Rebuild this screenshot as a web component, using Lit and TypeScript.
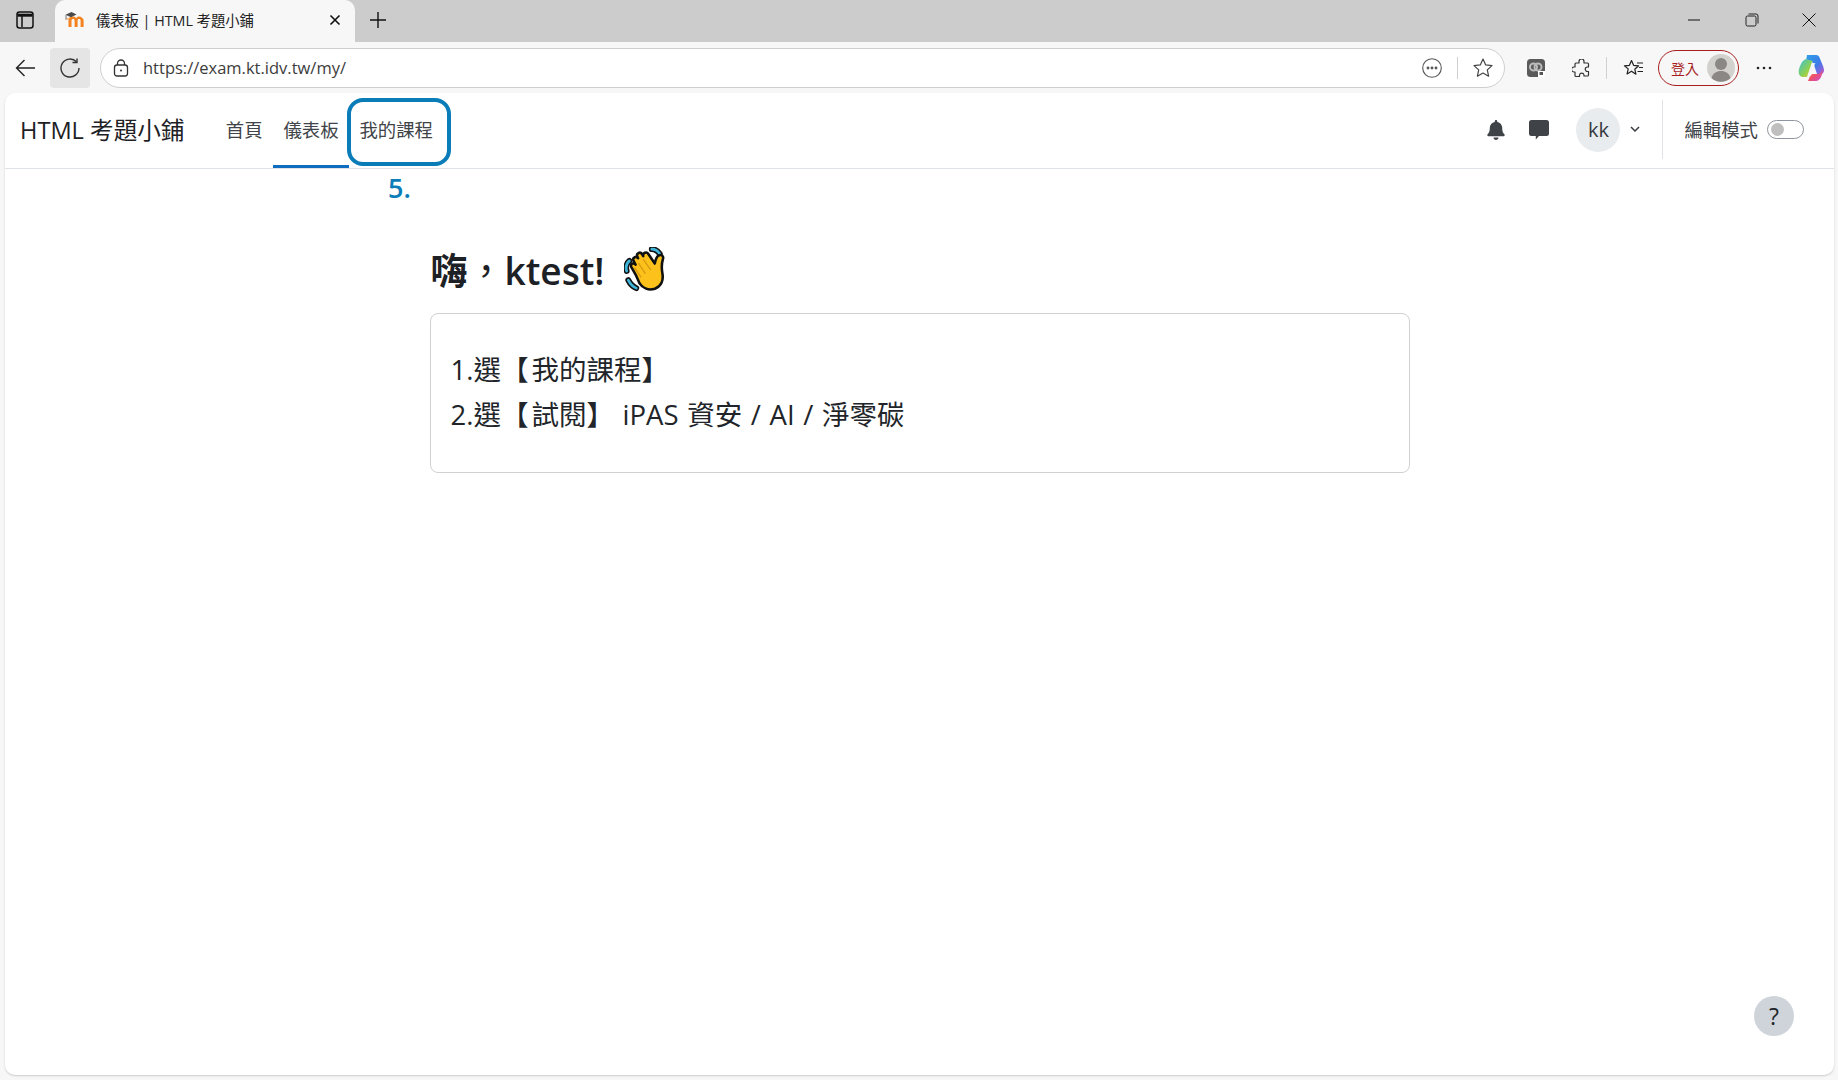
import { LitElement, html, css, svg } from "lit";
import { customElement } from "lit/decorators.js";

@customElement("app-root")
export class AppRoot extends LitElement {
  static styles = css`
    :host { display: block; width: 1838px; height: 1080px; background: #f7f7f7; font-family: "Open Sans", "Noto Sans CJK TC", sans-serif; overflow: hidden; }
  `;
  render() { return html`<browser-chrome></browser-chrome><moodle-page></moodle-page>`; }
}

@customElement("browser-chrome")
export class BrowserChrome extends LitElement {
  static styles = css`
    :host { display: block; font-family: "Open Sans", "Noto Sans CJK TC", sans-serif; color: #1f1f1f; }
    svg { display: block; flex: none; }
    .strip { height: 42px; background: #cccccc; display: flex; align-items: stretch; }
    .side { width: 49px; margin-right: 6px; padding-bottom: 2px; box-sizing: border-box; display: flex; align-items: center; justify-content: center; }
    .tab { width: 300px; background: #f7f7f7; border-radius: 10px 10px 0 0; display: flex; align-items: center; padding: 0 14px 2px 10px; box-sizing: border-box; gap: 10px; }
    .tab-title { flex: 1; font-size: 14.3px; white-space: nowrap; color: #222; margin-top: -2px; }
    .plus { width: 46px; padding-bottom: 2px; box-sizing: border-box; display: flex; align-items: center; justify-content: center; }
    .grow { flex: 1; }
    .win { display: flex; align-items: center; padding-bottom: 2px; }
    .win div { width: 57.5px; display: flex; justify-content: center; }
    .bar { height: 51px; display: flex; align-items: center; padding-top: 1px; box-sizing: border-box; }
    .back { width: 50px; display: flex; justify-content: center; }
    .reload { width: 40px; height: 40px; background: #e5e5e5; border-radius: 4px; display: flex; align-items: center; justify-content: center; }
    .url { margin-left: 10px; width: 1405px; height: 40px; box-sizing: border-box; border: 1px solid #cfcfcf; border-radius: 20px; background: #fff; display: flex; align-items: center; padding: 0 11px 0 12px; }
    .url-text { margin-left: 14px; font-size: 16.5px; color: #3c3c3c; flex: 1; padding-bottom: 1px; }
    .sep { width: 1px; height: 22px; background: #d0d0d0; margin: 0 15px 0 15px; }
    .tools { display: flex; align-items: center; flex: 1; }
    .t1 { margin-left: 22px; }
    .t2 { margin-left: 27px; }
    .tsep { width: 1px; height: 22px; background: #d0d0d0; margin: 0 15px 0 15px; }
    .fav { margin-left: 1px; }
    .signin { margin-left: 14px; width: 81px; height: 36px; box-sizing: border-box; border: 1.5px solid #a81e1e; border-radius: 18px; display: flex; align-items: center; padding: 0 3px 0 12px; justify-content: space-between; font-size: 14px; color: #a81e1e; }
    .dots { margin-left: 17px; }
    .copilot { margin-left: 25px; }
  `;
  render() {
    return html`
      <div class="strip">
        <div class="side">
          <svg width="18" height="18" viewBox="0 0 18 18" fill="none" stroke="#111" stroke-width="1.5"><rect x="1" y="1" width="16" height="16" rx="2.5"/><path d="M1.5 4.2h15" stroke-width="3"/><path d="M6 5v11"/></svg>
        </div>
        <div class="tab">
          <svg width="21" height="18" viewBox="0 0 21 18">
            <g transform="translate(-2.5 0)">
              <path d="M6 8.500V16h3V9.800c0-1 .6-1.700 1.600-1.700s1.500.7 1.500 1.700V16h3V9.800c0-1 .6-1.700 1.500-1.700s1.500.7 1.500 1.700V16h3V8.800C20.100 6.800 18.600 5.500 16.800 5.500c-1.400 0-2.500.6-3.200 1.600-.7-1-1.800-1.600-3.100-1.600C8 5.500 6.500 6.500 6 8.500z" fill="#f58220"/>
              <path d="M2.500 8.500 L6 6.500 L6 8.500 Z" fill="#f5a35c"/>
              <path d="M3 3.800 L9 1 L14 3.400 L8.500 6.200 Z" fill="#4a4a4a"/>
              <path d="M3.500 4v4.500" stroke="#777" stroke-width="1"/>
            </g>
          </svg>
          <div class="tab-title">儀表板 | HTML 考題小鋪</div>
          <svg width="12" height="12" viewBox="0 0 12 12" stroke="#111" stroke-width="1.6" fill="none"><path d="M1.500 1.500l9 9M10.500 1.500l-9 9"/></svg>
        </div>
        <div class="plus"><svg width="18" height="18" viewBox="0 0 18 18" stroke="#111" stroke-width="1.400"><path d="M9 1v16M1 9h16"/></svg></div>
        <div class="grow"></div>
        <div class="win">
          <div><svg width="14" height="14" viewBox="0 0 14 14" stroke="#111" stroke-width="1"><path d="M1 7h12"/></svg></div>
          <div><svg width="14" height="14" viewBox="0 0 14 14" stroke="#222" stroke-width="1" fill="none"><rect x="1" y="3" width="10" height="10" rx="1.500"/><path d="M3.500 1h7.500a2 2 0 0 1 2 2v7.500"/></svg></div>
          <div><svg width="14" height="14" viewBox="0 0 14 14" stroke="#111" stroke-width="1"><path d="M.5.500l13 13M13.500.500l-13 13"/></svg></div>
        </div>
      </div>
      <div class="bar">
        <div class="back"><svg width="20" height="18" viewBox="0 0 20 18" fill="none" stroke="#222" stroke-width="1.400"><path d="M9.500 1L1.500 9l8 8M1.500 9H20"/></svg></div>
        <div class="reload"><svg width="20" height="20" viewBox="0 0 20 20" fill="none" stroke="#333" stroke-width="1.400"><path d="M16.500 3.800A9 9 0 1 0 19 10"/><path d="M17 0.500v4h-4.500"/></svg></div>
        <div class="url">
          <svg width="16" height="18" viewBox="0 0 16 18" fill="none" stroke="#333" stroke-width="1.300"><rect x="1.500" y="6" width="13" height="11" rx="2.500"/><path d="M4.500 6V4.500a3.500 3.500 0 0 1 7 0V6"/><circle cx="8" cy="11.500" r="1" fill="#333" stroke="none"/></svg>
          <div class="url-text">https://exam.kt.idv.tw/my/</div>
          <svg width="20" height="20" viewBox="0 0 20 20" fill="none" stroke="#555" stroke-width="1.100"><circle cx="10" cy="10" r="9.300"/><circle cx="6" cy="10" r=".9" fill="#555"/><circle cx="10" cy="10" r=".9" fill="#555"/><circle cx="14" cy="10" r=".9" fill="#555"/></svg>
          <div class="sep"></div>
          <svg width="20" height="20" viewBox="0 0 20 20" fill="none" stroke="#444" stroke-width="1.200"><path d="M10 1l2.700 5.900 6.300.7-4.700 4.300 1.300 6.300L10 15l-5.600 3.200 1.300-6.300L1 7.600l6.300-.7z" stroke-linejoin="round"/></svg>
        </div>
        <div class="tools">
          <svg class="t1" width="18" height="18" viewBox="0 0 18 18"><rect width="18" height="18" rx="3.500" fill="#5a5a5a"/><circle cx="6.500" cy="8" r="3.500" fill="none" stroke="#bbb" stroke-width="2"/><circle cx="11" cy="8" r="3.500" fill="none" stroke="#bbb" stroke-width="2"/><rect x="11" y="12" width="7" height="6" fill="#fff"/><rect x="12.500" y="13" width="3.500" height="3" fill="#555"/></svg>
          <svg class="t2" width="19" height="19" viewBox="0 0 19 19" fill="none" stroke="#333" stroke-width="1.200"><path d="M7 2.500a2.500 2.500 0 0 1 5 0V4h3.500a1 1 0 0 1 1 1v3h-1a2.200 2.200 0 0 0 0 4.500h1V16a1 1 0 0 1-1 1h-3.500v-1a2.300 2.300 0 0 0-4.500 0v1.500H4a1 1 0 0 1-1-1V13H2a2.500 2.500 0 0 1 0-5h1V5a1 1 0 0 1 1-1h3z" stroke-linejoin="round"/></svg>
          <div class="tsep"></div>
          <svg class="fav" width="21" height="19" viewBox="0 0 21 19" fill="none" stroke="#222" stroke-width="1.200"><path d="M8.500 1.500l2.100 4.800 5 .5-3.800 3.400 1.100 5L8.500 12.200 4.100 14.900l1.100-5L1.400 6.800l5-.5z" stroke-linejoin="round"/><path d="M14 4h6M16 8.500h4M14.500 12.500h5.500"/></svg>
          <div class="signin">
            <span>登入</span>
            <svg width="28" height="28" viewBox="0 0 28 28"><circle cx="14" cy="14" r="14" fill="#d3d1cd"/><circle cx="14" cy="10" r="6" fill="#8a8784"/><path d="M4.500 24c1.500-5 5-7 9.500-7s8 2 9.500 7a14 14 0 0 1-19 0z" fill="#8a8784"/></svg>
          </div>
          <svg class="dots" width="16" height="4" viewBox="0 0 16 4" fill="#222"><circle cx="2" cy="2" r="1.300"/><circle cx="8" cy="2" r="1.300"/><circle cx="14" cy="2" r="1.300"/></svg>
          <svg class="copilot" width="28" height="28" viewBox="0 0 28 28">
            <defs>
              <linearGradient id="cg" x1="0" y1="0" x2="1" y2="1"><stop offset="0" stop-color="#38c0d8"/><stop offset=".6" stop-color="#8fd14f"/><stop offset="1" stop-color="#f6c23c"/></linearGradient>
              <linearGradient id="cr" x1="0" y1="0" x2="1" y2="1"><stop offset="0" stop-color="#f6a93c"/><stop offset=".5" stop-color="#ee4f6a"/><stop offset="1" stop-color="#c64fd8"/></linearGradient>
              <linearGradient id="cp" x1="0" y1="0" x2="1" y2="1"><stop offset="0" stop-color="#2f9fe8"/><stop offset=".55" stop-color="#3b7de8"/><stop offset="1" stop-color="#b455d8"/></linearGradient>
            </defs>
            <path d="M10 1h9c2 0 3 1 3.500 2.500L26 12c1 3 2 6-1 8h-5l-3-9c-1-2-2-4-5-4H9z" fill="url(#cp)"/>
            <path d="M9 5c-3 1-4 3-5 5-2 4-3 7-2 10 .6 2 2 3 4 3h4l4-12c.6-2 .8-3 2-4z" fill="url(#cg)"/>
            <path d="M11 27h8c3 0 5-3 6-7 .5-2 .5-3 .5-5 -1 3-2 5-5 5h-5c-1.500 0-2 1-2.500 2z" fill="url(#cr)"/>
            <path d="M16 9c-1.200 1-1.500 2.500-2 4l-2 6c-.4 1.200-.8 2.500-1.500 3.500h2.500c1.200-1 1.600-2.400 2-3.600l2-6c.4-1.400.8-2.800 1.500-3.900z" fill="#f4f4f4" opacity=".85"/>
          </svg>
        </div>
      </div>
    `;
  }
}

const waveHand = svg`
  <g fill="none" stroke-linecap="round">
    <path d="M5 13c-2.500 2-3.500 6-2.500 9.500" stroke="#111" stroke-width="5.500"/>
    <path d="M5 13c-2.500 2-3.500 6-2.500 9.500" stroke="#3db4d8" stroke-width="2.500"/>
    <path d="M26 2c3 0 5.500 1.500 7.500 4.500" stroke="#111" stroke-width="5.500"/>
    <path d="M26 2c3 0 5.500 1.500 7.500 4.500" stroke="#3db4d8" stroke-width="2.500"/>
    <path d="M4 31c1.500 3 4 6 7.500 7.500" stroke="#111" stroke-width="5.500"/>
    <path d="M4 31c1.500 3 4 6 7.500 7.500" stroke="#3db4d8" stroke-width="2.500"/>
  </g>
  <path d="M11 26 L7 19 c-1.600-3 2-5 3.800-2.500 L9 13 c-1.600-3 2.400-5.200 4.200-2.500 L12.500 9 c-1.400-3 2.600-5 4.300-2.400 L18 8.500 c-.8-3 3.200-4.500 4.800-2 l6 9 c.6-3 1.500-6 3.500-7.500 2.500-1.500 5 .5 4.200 3 -1.500 5-1.500 9-.5 14 1 6-1 12-7 14 -6 2-11.500-.500-14.500-5z" fill="#fcc21b" stroke="#111" stroke-width="2.400" stroke-linejoin="round"/>
  <path d="M13.500 15 l6.500 10 M18 11.500 l7 10 M10 19.500 l6 9" stroke="#d99a10" stroke-width="1.300" fill="none"/>
`;

@customElement("moodle-page")
export class MoodlePage extends LitElement {
  static styles = css`
    :host { display: block; position: relative; margin: 0 4px 0 5px; height: 982px; background: #fff; border-radius: 10px; font-family: "Open Sans", "Noto Sans CJK TC", sans-serif; color: #1d2125; box-shadow: 0 1px 2px rgba(0,0,0,.18); }
    svg { display: block; flex: none; }
    header { height: 76px; box-sizing: border-box; border-bottom: 1px solid #dee2e6; display: flex; align-items: stretch; padding: 0 0 0 15px; }
    .brand { font-size: 23.6px; color: #1d2125; display: flex; align-items: center; margin-right: 31px; white-space: nowrap; padding-bottom: 3px; }
    nav { display: flex; align-items: stretch; }
    .item { padding: 0 10.4px 4px; font-size: 18.4px; color: #404448; display: flex; align-items: center; white-space: nowrap; box-sizing: border-box; }
    .item.active { border-bottom: 3px solid #0f6cbf; padding-top: 0; padding-bottom: 1px; }
    .right { margin-left: auto; display: flex; align-items: center; padding: 0 30px 2px 0; }
    .comment { margin-left: 24px; }
    .avatar { margin-left: 27px; width: 44px; height: 44px; border-radius: 50%; background: #e9ecef; display: flex; align-items: center; justify-content: center; font-size: 20px; color: #343a40; }
    .chev { margin-left: 10px; }
    .vsep { width: 1px; height: 59px; background: #dee2e6; margin: 0 21px 0 22px; }
    .edit { font-size: 18.4px; color: #404448; white-space: nowrap; margin: -2px 9px 0 0; }
    .toggle { width: 37px; height: 19px; box-sizing: border-box; border: 1px solid #8f959e; border-radius: 10px; display: flex; align-items: center; padding-left: 3px; }
    .knob { width: 13px; height: 13px; border-radius: 50%; background: #bfbfbf; }
    main { width: 980px; margin: 0 auto; padding-top: 80px; }
    h2 { margin: 0 0 21px 1px; font-size: 37px; line-height: 43px; height: 43px; font-weight: 600; display: flex; align-items: center; white-space: nowrap; color: #1d2125; }
    .comma { font-weight: 400; }
    .wave { margin: -2px 0 -2px 20px; }
    .card { box-sizing: border-box; height: 160px; border: 1px solid #cfd1d3; border-radius: 8px; padding: 33px 20px; font-size: 27.5px; line-height: 45px; color: #212529; word-spacing: 1.5px; }
    .card div { white-space: nowrap; }
    .lb { padding-right: 3px; }
    .callout { position: absolute; left: 342px; top: 5px; width: 104px; height: 68px; box-sizing: border-box; border: 4px solid #0a7cb8; border-radius: 16px; pointer-events: none; }
    .step { position: absolute; left: 383px; top: 78px; font-size: 27px; line-height: 34px; font-weight: 600; color: #0a7cb8; }
    .help { position: absolute; left: 1749px; top: 903px; width: 40px; height: 40px; border-radius: 50%; background: #ced4da; display: flex; align-items: center; justify-content: center; font-size: 23px; font-weight: 500; color: #212529; }
  `;
  render() {
    return html`
      <header>
        <div class="brand">HTML 考題小鋪</div>
        <nav>
          <div class="item">首頁</div>
          <div class="item active">儀表板</div>
          <div class="item">我的課程</div>
        </nav>
        <div class="right">
          <svg width="18" height="20" viewBox="0 0 448 512" fill="#3f4347"><path d="M224 512c35 0 64-29 64-64H160c0 35 29 64 64 64zm215-150c-19-21-55-52-55-154 0-78-54-140-128-155V32a32 32 0 1 0-64 0v21C118 68 64 130 64 208c0 102-36 133-55 154-6 6-9 14-9 22 0 17 13 32 32 32h384c19 0 32-15 32-32 0-8-3-16-9-22z"/></svg>
          <svg class="comment" width="20" height="20" viewBox="0 0 20 20" fill="#3f4347"><path d="M2.500 0h15A2.500 2.500 0 0 1 20 2.500v11a2.500 2.500 0 0 1-2.500 2.500H10l-3.200 3.500V16H2.500A2.500 2.500 0 0 1 0 13.500v-11A2.500 2.500 0 0 1 2.500 0z"/></svg>
          <div class="avatar">kk</div>
          <svg class="chev" width="10" height="7" viewBox="0 0 10 7" fill="none" stroke="#343a40" stroke-width="1.500"><path d="M1 1l4 4 4-4"/></svg>
          <div class="vsep"></div>
          <div class="edit">編輯模式</div>
          <div class="toggle"><div class="knob"></div></div>
        </div>
      </header>
      <main>
        <h2><span>嗨<span class="comma">，</span>ktest!</span><svg class="wave" width="47" height="47" viewBox="0 0 44 44">${waveHand}</svg></h2>
        <div class="card">
          <div>1.選<span class="lb">【</span>我的課程】</div>
          <div>2.選<span class="lb">【</span>試閱】 iPAS 資安 / AI / 淨零碳</div>
        </div>
      </main>
      <div class="callout"></div>
      <div class="step">5.</div>
      <div class="help">?</div>
    `;
  }
}
